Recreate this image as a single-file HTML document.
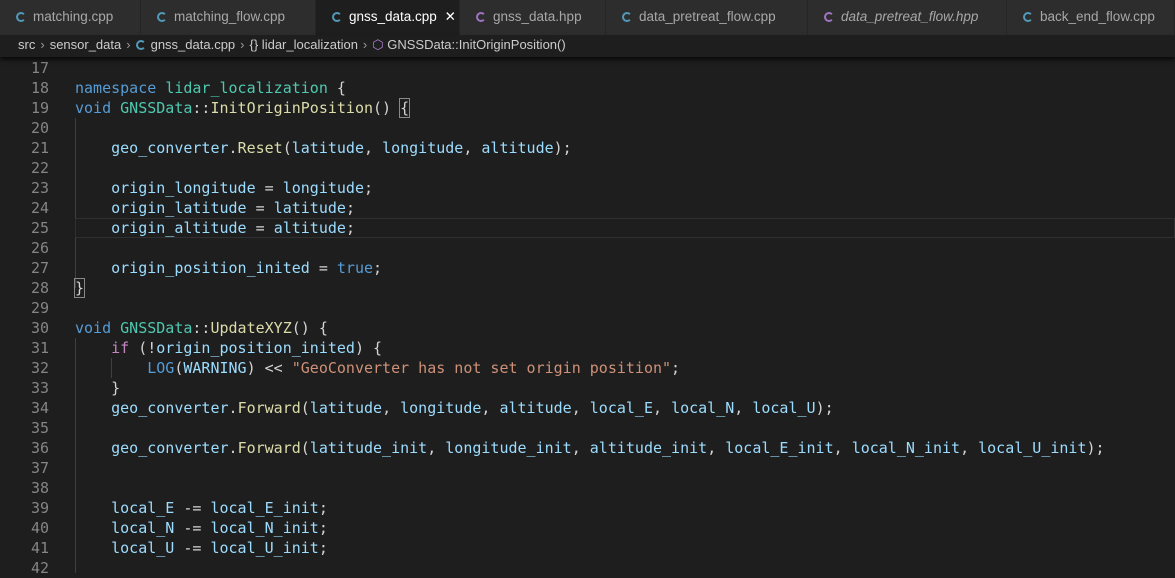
<!DOCTYPE html>
<html><head><meta charset="utf-8"><style>
*{margin:0;padding:0;box-sizing:border-box}
body{width:1175px;height:572px;background:#1e1e1e;overflow:hidden;font-family:"Liberation Sans","DejaVu Sans",sans-serif;position:relative}
.tabs{position:absolute;left:0;top:0;width:1175px;height:35px;background:#252526}
.tab{position:absolute;top:0;height:35px;background:#2d2d2d;color:#a8a8a8;font-size:13.5px;line-height:33px;padding-left:16px;border-right:1px solid #252526;white-space:nowrap;font-family:"Liberation Sans",sans-serif}
.tab.act{background:#1e1e1e;color:#fff}
.ic{display:inline-block;width:10px;height:10px;border-radius:50%;border:2.5px solid #519aba;border-right-color:transparent;margin-right:7px;vertical-align:-1px;position:relative}
.ic.p{border-color:#a074c4;border-right-color:transparent}
.bc{position:absolute;top:35px;left:0;width:1175px;height:22px;background:#1e1e1e;color:#cccccc;font-size:13px;line-height:20px;padding-left:18px;font-family:"Liberation Sans",sans-serif;white-space:nowrap;box-shadow:0 3px 4px #000a;z-index:2}
.bc .s{color:#999;margin:0 5px}
.code{position:absolute;top:58px;left:0;width:1175px;font-family:"DejaVu Sans Mono",monospace;font-size:15px}
.l{position:absolute;left:0;height:20px;line-height:20px;white-space:pre;width:1175px}
.n{position:absolute;left:0;width:49px;text-align:right;color:#858585}
.t{position:absolute;left:75px;color:#d4d4d4}
.k{color:#569cd6}.c{color:#4ec9b0}.f{color:#dcdcaa}.v{color:#9cdcfe}.s2{color:#ce9178}.p2{color:#c586c0}
.g{position:absolute;width:1px;background:#404040}
</style></head><body>
<div class="tabs">
<div class="tab" style="left:0;width:141px"><span class="ic"></span>matching.cpp</div>
<div class="tab" style="left:141px;width:175px"><span class="ic"></span>matching_flow.cpp</div>
<div class="tab act" style="left:316px;width:144px"><span class="ic"></span>gnss_data.cpp <span style="margin-left:4px">✕</span></div>
<div class="tab" style="left:460px;width:146px"><span class="ic p"></span>gnss_data.hpp</div>
<div class="tab" style="left:606px;width:202px"><span class="ic"></span>data_pretreat_flow.cpp</div>
<div class="tab" style="left:808px;width:199px;font-style:italic"><span class="ic p"></span>data_pretreat_flow.hpp</div>
<div class="tab" style="left:1007px;width:168px"><span class="ic"></span>back_end_flow.cpp</div>
</div>
<div class="bc">src<span class="s">›</span>sensor_data<span class="s">›</span><span class="ic" style="width:10px;height:10px;margin-right:5px"></span>gnss_data.cpp<span class="s">›</span>{} lidar_localization<span class="s">›</span><span style="color:#b180d7">⬡</span> GNSSData::InitOriginPosition()</div>
<div class="code">
<div class="g" style="left:75px;top:60px;height:170px"></div>
<div class="g" style="left:75px;top:280px;height:235px"></div>
<div class="g" style="left:111px;top:300px;height:20px"></div>
<div style="position:absolute;left:75px;top:160px;width:1100px;height:20px;border:1px solid #303030"></div>
<div class="l" style="top:0"><span class="n">17</span></div>
<div class="l" style="top:20px"><span class="n">18</span><span class="t"><span class="k">namespace</span> <span class="c">lidar_localization</span> {</span></div>
<div class="l" style="top:40px"><span class="n">19</span><span class="t"><span class="k">void</span> <span class="c">GNSSData</span>::<span class="f">InitOriginPosition</span>() <span style="outline:1px solid #888">{</span></span></div>
<div class="l" style="top:60px"><span class="n">20</span></div>
<div class="l" style="top:80px"><span class="n">21</span><span class="t">    <span class="v">geo_converter</span>.<span class="f">Reset</span>(<span class="v">latitude</span>, <span class="v">longitude</span>, <span class="v">altitude</span>);</span></div>
<div class="l" style="top:100px"><span class="n">22</span></div>
<div class="l" style="top:120px"><span class="n">23</span><span class="t">    <span class="v">origin_longitude</span> = <span class="v">longitude</span>;</span></div>
<div class="l" style="top:140px"><span class="n">24</span><span class="t">    <span class="v">origin_latitude</span> = <span class="v">latitude</span>;</span></div>
<div class="l" style="top:160px"><span class="n">25</span><span class="t">    <span class="v">origin_altitude</span> = <span class="v">altitude</span>;</span></div>
<div class="l" style="top:180px"><span class="n">26</span></div>
<div class="l" style="top:200px"><span class="n">27</span><span class="t">    <span class="v">origin_position_inited</span> = <span class="k">true</span>;</span></div>
<div class="l" style="top:220px"><span class="n">28</span><span class="t"><span style="outline:1px solid #888">}</span></span></div>
<div class="l" style="top:240px"><span class="n">29</span></div>
<div class="l" style="top:260px"><span class="n">30</span><span class="t"><span class="k">void</span> <span class="c">GNSSData</span>::<span class="f">UpdateXYZ</span>() {</span></div>
<div class="l" style="top:280px"><span class="n">31</span><span class="t">    <span class="p2">if</span> (!<span class="v">origin_position_inited</span>) {</span></div>
<div class="l" style="top:300px"><span class="n">32</span><span class="t">        <span class="k">LOG</span>(<span class="v">WARNING</span>) &lt;&lt; <span class="s2">"GeoConverter has not set origin position"</span>;</span></div>
<div class="l" style="top:320px"><span class="n">33</span><span class="t">    }</span></div>
<div class="l" style="top:340px"><span class="n">34</span><span class="t">    <span class="v">geo_converter</span>.<span class="f">Forward</span>(<span class="v">latitude</span>, <span class="v">longitude</span>, <span class="v">altitude</span>, <span class="v">local_E</span>, <span class="v">local_N</span>, <span class="v">local_U</span>);</span></div>
<div class="l" style="top:360px"><span class="n">35</span></div>
<div class="l" style="top:380px"><span class="n">36</span><span class="t">    <span class="v">geo_converter</span>.<span class="f">Forward</span>(<span class="v">latitude_init</span>, <span class="v">longitude_init</span>, <span class="v">altitude_init</span>, <span class="v">local_E_init</span>, <span class="v">local_N_init</span>, <span class="v">local_U_init</span>);</span></div>
<div class="l" style="top:400px"><span class="n">37</span></div>
<div class="l" style="top:420px"><span class="n">38</span></div>
<div class="l" style="top:440px"><span class="n">39</span><span class="t">    <span class="v">local_E</span> -= <span class="v">local_E_init</span>;</span></div>
<div class="l" style="top:460px"><span class="n">40</span><span class="t">    <span class="v">local_N</span> -= <span class="v">local_N_init</span>;</span></div>
<div class="l" style="top:480px"><span class="n">41</span><span class="t">    <span class="v">local_U</span> -= <span class="v">local_U_init</span>;</span></div>
<div class="l" style="top:500px"><span class="n">42</span></div>
</div>
</body></html>
